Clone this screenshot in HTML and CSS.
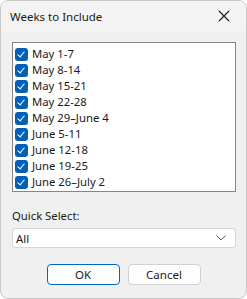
FILE: index.html
```html
<!DOCTYPE html>
<html lang="en">
<head>
<meta charset="UTF-8">
<meta name="viewport" content="width=device-width, initial-scale=1.0">
<title>Weeks to Include</title>
<link rel="stylesheet" href="styles.css">
</head>
<body>
<div class="window">
    <div class="titlebar">
        <span class="title">Weeks to Include</span>
        <svg class="close" width="12" height="12" viewBox="0 0 12 12">
            <path d="M1 1 L11 11 M11 1 L1 11" stroke="#1a1a1a" stroke-width="1.1" fill="none"/>
        </svg>
    </div>
    <div class="content">
        <div class="listbox">
            <label class="item"><span class="check"></span>May 1-7</label>
            <label class="item"><span class="check"></span>May 8-14</label>
            <label class="item"><span class="check"></span>May 15-21</label>
            <label class="item"><span class="check"></span>May 22-28</label>
            <label class="item"><span class="check"></span>May 29–June 4</label>
            <label class="item"><span class="check"></span>June 5-11</label>
            <label class="item"><span class="check"></span>June 12-18</label>
            <label class="item"><span class="check"></span>June 19-25</label>
            <label class="item"><span class="check"></span>June 26–July 2</label>
        </div>
        <div class="field-label">Quick Select:</div>
        <div class="select">
            <span>All</span>
            <svg width="10" height="6" viewBox="0 0 10 6">
                <path d="M0.5 0.5 L5 5 L9.5 0.5" stroke="#5a5a5a" stroke-width="1" fill="none"/>
            </svg>
        </div>
        <div class="buttons">
            <button class="btn default">OK</button>
            <button class="btn">Cancel</button>
        </div>
    </div>
</div>
</body>
</html>
```

FILE: styles.css
```css
body {
    margin: 0;
    font-family: "Noto Sans", "Open Sans", sans-serif;
    font-size: 11.3px;
    color: #1a1a1a;
    background: #ffffff;
}
.window {
    width: 247px;
    height: 299px;
    box-sizing: border-box;
    border: 1px solid #c8c8c8;
    border-radius: 8px;
    background: #f0f0f0;
    overflow: hidden;
}
.titlebar {
    height: 30px;
    display: flex;
    align-items: center;
    justify-content: space-between;
    padding: 0 16px 0 9px;
    background: #f3f3f3;
}
.title {
    font-size: 11.5px;
}
.content {
    padding: 11px 10px 0 11px;
}
.listbox {
    height: 145px;
    border: 1px solid #868686;
    background: #ffffff;
    padding: 3px 2px 0 2px;
}
.item {
    display: flex;
    align-items: center;
    height: 16px;
    gap: 4px;
    line-height: 16px;
}
.check {
    width: 13px;
    height: 13px;
    border-radius: 3px;
    background: #005fb8;
    position: relative;
}
.check::after {
    content: "";
    position: absolute;
    left: 4px;
    top: 2px;
    width: 3px;
    height: 6px;
    border-right: 1px solid #ffffff;
    border-bottom: 1px solid #ffffff;
    transform: rotate(40deg);
}
.field-label {
    margin-top: 14px;
    height: 20px;
    line-height: 20px;
}
.select {
    margin-top: 2px;
    height: 18px;
    border: 1px solid #d6d6d6;
    border-radius: 3px;
    background: #ffffff;
    display: flex;
    align-items: center;
    justify-content: space-between;
    padding: 0 9px 0 3px;
}
.buttons {
    display: flex;
    justify-content: center;
    gap: 8px;
    margin-top: 16px;
    padding-right: 1px;
}
.btn {
    width: 73px;
    height: 21px;
    font-family: inherit;
    font-size: 11.5px;
    color: #1a1a1a;
    background: #fdfdfd;
    border: 1px solid #d0d0d0;
    border-radius: 4px;
    padding: 0;
}
.btn.default {
    border-color: #0067c0;
}
```
